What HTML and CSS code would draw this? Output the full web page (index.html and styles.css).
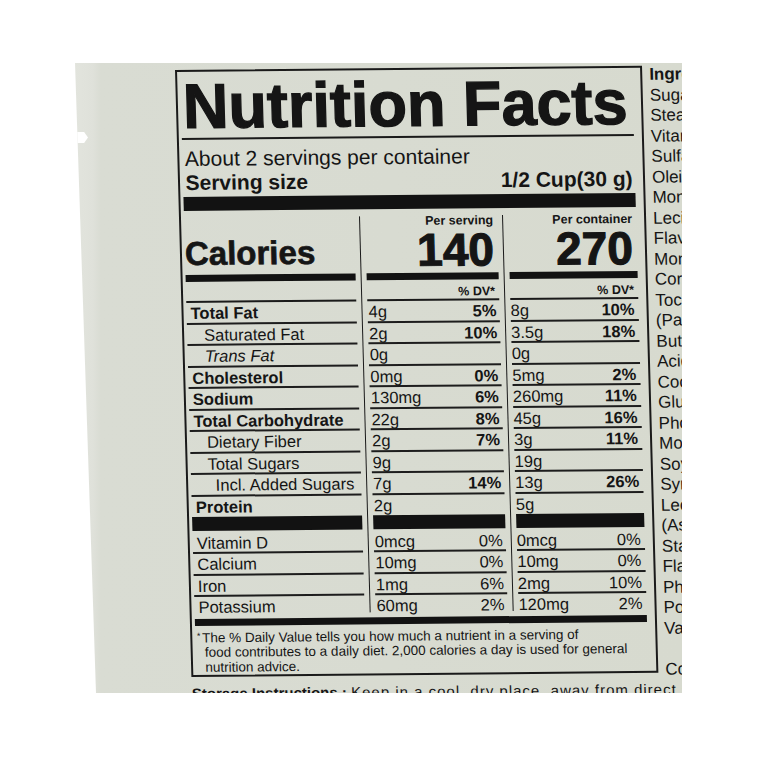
FILE: index.html
```html
<!DOCTYPE html>
<html lang="en">
<head>
  <meta charset="UTF-8">
  <meta name="viewport" content="width=device-width, initial-scale=1.0">
  <title>Nutrition Facts</title>
  <link rel="stylesheet" href="styles.css">
</head>
<body>
  <div class="pack">
    <div class="notch"></div>
    <div class="print">
      <div class="print-row">
        <section class="label">
          <h1 class="title">Nutrition Facts</h1>
          <div class="servings">
            <div>About 2 servings per container</div>
            <div class="serving-size"><span>Serving size</span><span>1/2 Cup(30 g)</span></div>
          </div>
          <div class="bar-thick"></div>

          <div class="facts">
            <div class="vline first"></div>
            <div class="vline second"></div>

            <div class="cal-name">Calories</div>
            <div class="cal-value"><small>Per serving</small><strong>140</strong></div>
            <div class="cal-value"><small>Per container</small><strong>270</strong></div>

            <div class="cal-bar"></div>
            <div class="cal-bar"></div>
            <div class="cal-bar"></div>

            <div class="dv"></div>
            <div class="dv">% DV*</div>
            <div class="dv">% DV*</div>

            <div class="cell name bold">Total Fat</div>
            <div class="cell val"><span>4g</span><b>5%</b></div>
            <div class="cell val"><span>8g</span><b>10%</b></div>

            <div class="cell name sub">Saturated Fat</div>
            <div class="cell val"><span>2g</span><b>10%</b></div>
            <div class="cell val"><span>3.5g</span><b>18%</b></div>

            <div class="cell name sub"><i>Trans</i> <i>Fat</i></div>
            <div class="cell val"><span>0g</span></div>
            <div class="cell val"><span>0g</span></div>

            <div class="cell name bold">Cholesterol</div>
            <div class="cell val"><span>0mg</span><b>0%</b></div>
            <div class="cell val"><span>5mg</span><b>2%</b></div>

            <div class="cell name bold">Sodium</div>
            <div class="cell val"><span>130mg</span><b>6%</b></div>
            <div class="cell val"><span>260mg</span><b>11%</b></div>

            <div class="cell name bold">Total Carbohydrate</div>
            <div class="cell val"><span>22g</span><b>8%</b></div>
            <div class="cell val"><span>45g</span><b>16%</b></div>

            <div class="cell name sub">Dietary Fiber</div>
            <div class="cell val"><span>2g</span><b>7%</b></div>
            <div class="cell val"><span>3g</span><b>11%</b></div>

            <div class="cell name sub">Total Sugars</div>
            <div class="cell val"><span>9g</span></div>
            <div class="cell val"><span>19g</span></div>

            <div class="cell name sub2">Incl. Added Sugars</div>
            <div class="cell val"><span>7g</span><b>14%</b></div>
            <div class="cell val"><span>13g</span><b>26%</b></div>

            <div class="cell name bold last">Protein</div>
            <div class="cell val last"><span>2g</span></div>
            <div class="cell val last"><span>5g</span></div>

            <div class="mid-bar"></div>
            <div class="mid-bar"></div>
            <div class="mid-bar"></div>

            <div class="cell name vit-first">Vitamin D</div>
            <div class="cell val vit-first"><span>0mcg</span><span>0%</span></div>
            <div class="cell val vit-first"><span>0mcg</span><span>0%</span></div>

            <div class="cell name">Calcium</div>
            <div class="cell val"><span>10mg</span><span>0%</span></div>
            <div class="cell val"><span>10mg</span><span>0%</span></div>

            <div class="cell name">Iron</div>
            <div class="cell val"><span>1mg</span><span>6%</span></div>
            <div class="cell val"><span>2mg</span><span>10%</span></div>

            <div class="cell name vit-last">Potassium</div>
            <div class="cell val vit-last"><span>60mg</span><span>2%</span></div>
            <div class="cell val vit-last"><span>120mg</span><span>2%</span></div>
          </div>

          <div class="bar-bottom"></div>
          <p class="note"><span class="ast">*</span>The % Daily Value tells you how much a nutrient in a serving of<br>food contributes to a daily diet. 2,000 calories a day is used for general<br>nutrition advice.</p>
        </section>

        <div class="ingredients">
          <b>Ingredients:</b><br>
          Sugar, Palm Kernel Oil,<br>
          Stearin, Whole Milk Powder,<br>
          Vitamin E, Calcium<br>
          Sulfate, Palm<br>
          Olein, Cocoa Butter,<br>
          Mono- and Diglycerides,<br>
          Lecithin, Natural<br>
          Flavor, Salt,<br>
          Mono Glycerides,<br>
          Corn Syrup Solids,<br>
          Tocopherols<br>
          (Palm Oil),<br>
          Butter Oil,<br>
          Acid Casein,<br>
          Cocoa Powder,<br>
          Glucose Syrup,<br>
          Phosphates,<br>
          Mono Potassium<br>
          Soy Lecithin,<br>
          Syrup, Salt,<br>
          Lecithin<br>
          (As Emulsifier),<br>
          Starch, Natural<br>
          Flavor, Sodium<br>
          Phosphate,<br>
          Potassium Sorbate,<br>
          Vanillin.<br>
          <br>
          Contains: Milk, Soy.
        </div>
      </div>

      <p class="storage"><b>Storage Instructions :</b> <span>Keep in a cool, dry place, away from direct sunlight.</span></p>
    </div>
  </div>
</body>
</html>
```

FILE: styles.css
```css
body {
  margin: 0;
  padding: 63px 0 0 75px;
  background: #fff;
  font-family: 'Liberation Sans', Arial, sans-serif;
  color: #151515;
}

.pack {
  position: relative;
  width: 607px;
  height: 630px;
  box-sizing: border-box;
  padding: 7px 0 0 100px;
  overflow: hidden;
  background: linear-gradient(90deg, #e2e4dd 0, #dfe1da 18px, #d9dcd3 26px, #d7dacf 100%);
  clip-path: polygon(0 0, 100% 0, 100% 100%, 21px 100%);
}
.notch {
  position: absolute;
  left: 0;
  top: 69px;
  width: 13px;
  height: 11px;
  background: #fff;
  clip-path: polygon(0 0, 70% 0, 100% 50%, 70% 100%, 0 100%);
}

/* the print sits a little skewed on the bag */
.print {
  transform: matrix(1, -0.009, 0.027, 1, 0, 0);
  transform-origin: 0 0;
}
.print-row {
  display: flex;
  align-items: flex-start;
}

.label {
  flex: none;
  width: 467px;
  height: 607px;
  box-sizing: border-box;
  border: 2px solid #1a1a1a;
  padding: 2.9px 8px 0 3px;
}
.title {
  margin: 0;
  padding-left: 2px;
  font-size: 63px;
  line-height: 63px;
  font-weight: bold;
  white-space: nowrap;
  -webkit-text-stroke: 1.3px #151515;
  border-bottom: 2px solid #1a1a1a;
}
.servings {
  margin-top: 7px;
  padding: 0 2.5px;
  font-size: 21px;
  line-height: 24px;
}
.serving-size {
  display: flex;
  justify-content: space-between;
  font-weight: bold;
}
.bar-thick {
  height: 14px;
  margin-top: 2.1px;
  background: #121212;
}

.facts {
  display: grid;
  grid-template-columns: 170px 1px 132px 1px 1fr;
  column-gap: 5px;
  margin-top: 7px;
}
.vline {
  grid-row: 1 / span 18;
  margin-bottom: 5px;
  background: #1a1a1a;
}
.vline.first { grid-column: 2; }
.vline.second { grid-column: 4; }

.cal-name {
  align-self: end;
  padding-bottom: 4.5px;
  font-size: 33px;
  line-height: 32px;
  font-weight: bold;
  -webkit-text-stroke: 0.7px #151515;
}
.cal-value {
  text-align: right;
  padding-right: 4px;
  font-weight: bold;
}
.cal-value small {
  display: block;
  font-size: 12.5px;
  line-height: 11px;
}
.cal-value strong {
  display: block;
  font-size: 46px;
  line-height: 46px;
  -webkit-text-stroke: 1.1px #151515;
}
.cal-bar {
  height: 7px;
  background: #121212;
}
.dv {
  display: flex;
  align-items: flex-end;
  justify-content: flex-end;
  height: 19.5px;
  padding-right: 4px;
  border-bottom: 2px solid #1a1a1a;
  font-size: 12.5px;
  line-height: 14px;
  font-weight: bold;
}

.cell {
  height: 19.5px;
  font-size: 16.5px;
  line-height: 20px;
  border-bottom: 2px solid #1d1d1d;
  white-space: nowrap;
}
.cell.last {
  height: 20px;
  border-bottom: 0;
}
.name { padding-left: 4px; }
.name.bold { font-weight: bold; }
.name.sub { padding-left: 17px; }
.name.sub2 { padding-left: 24.5px; }
.val {
  display: flex;
  justify-content: space-between;
  padding-right: 4px;
}
.val:nth-child(3n+1) {
  padding-left: 1px;
  padding-right: 3px;
}
.mid-bar {
  height: 14.5px;
  background: #121212;
}
.vit-first {
  box-sizing: border-box;
  height: 22.8px;
  padding-top: 1.3px;
}
.vit-last {
  height: 22.2px;
  border-bottom: 0;
}
.bar-bottom {
  height: 7px;
  background: #121212;
}
.note {
  margin: 2.5px 0 0;
  padding-left: 9.2px;
  text-indent: -7.5px;
  font-size: 13.5px;
  line-height: 15px;
  white-space: nowrap;
}
.note .ast {
  font-size: 9px;
  vertical-align: 3.5px;
  margin-right: 1.5px;
}

.ingredients {
  flex: none;
  margin: -1px 0 0 7px;
  font-size: 17px;
  line-height: 20.5px;
  white-space: nowrap;
}
.storage {
  margin: 0.5px 0 0;
  font-size: 15px;
  line-height: 18px;
  white-space: nowrap;
}
.storage span {
  letter-spacing: 1px;
}
```
